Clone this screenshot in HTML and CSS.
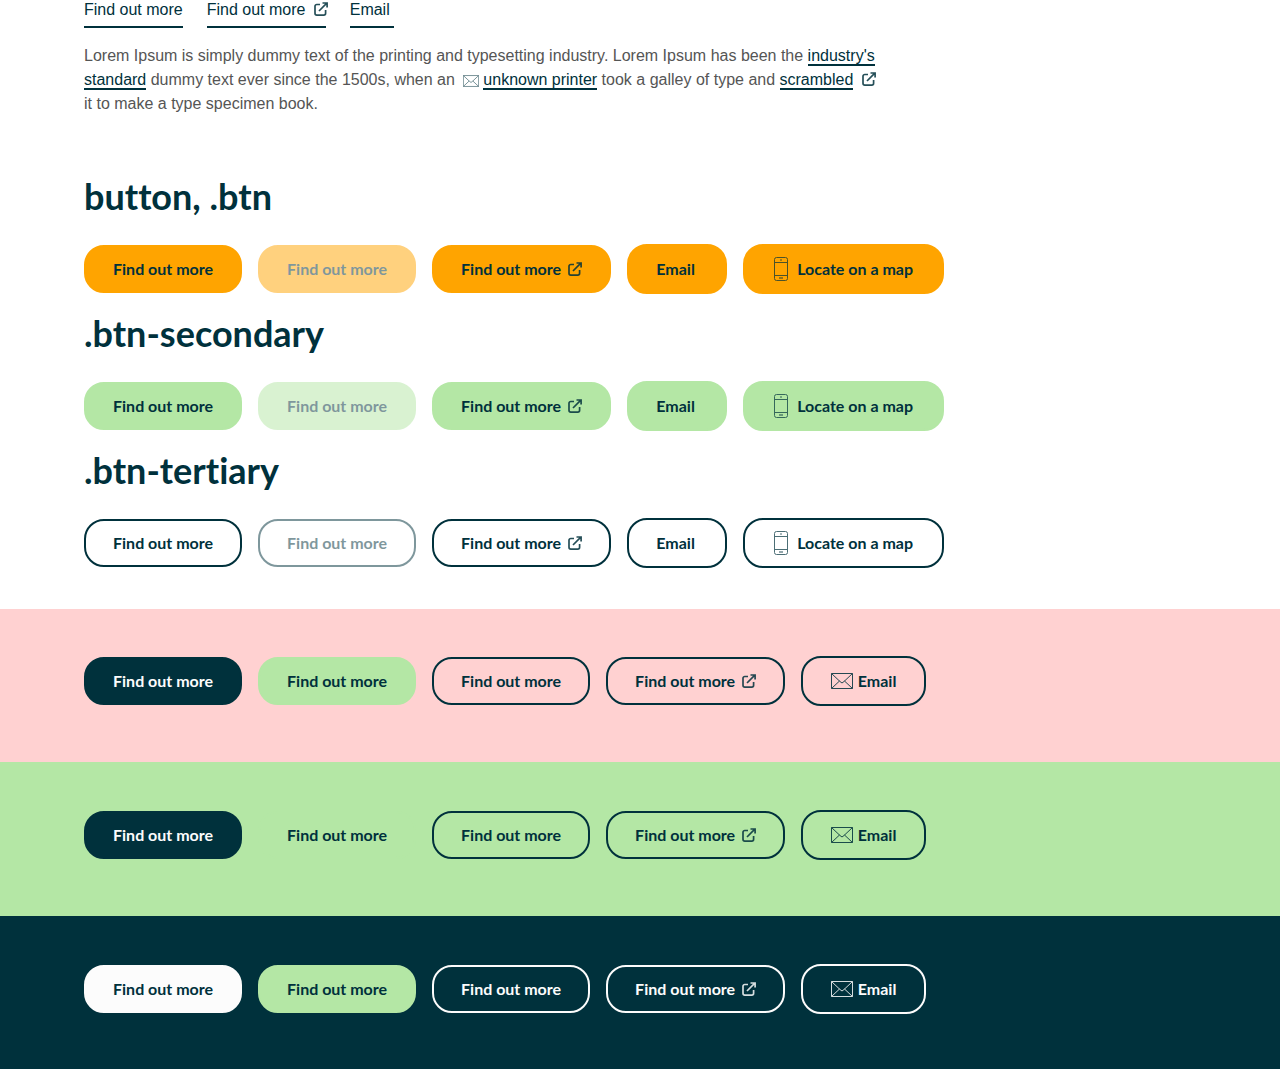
FILE: index.html
```html
<!DOCTYPE html>
<html lang="en">
<head>
<meta charset="utf-8">
<meta name="viewport" content="width=device-width, initial-scale=1">
<title>Links and buttons</title>
<link rel="stylesheet" href="styles.css">
</head>
<body>
<svg class="sprite" aria-hidden="true">
  <symbol id="external" viewBox="0 0 14 14">
    <path d="M6 2.500H2.800A1.800 1.800 0 0 0 1 4.300v7A1.800 1.800 0 0 0 2.800 13.100h7A1.800 1.800 0 0 0 11.600 11.300V8" fill="none" stroke="currentColor" stroke-width="1.700"/>
    <path d="M5 9L12.800 1.200M8.500 1h4.600v4.600" fill="none" stroke="currentColor" stroke-width="1.700"/>
  </symbol>
  <symbol id="mail" viewBox="0 0 22 16">
    <path d="M.5.5h21v15H.5zM.5.5L9 8.500l2 1.500 2-1.500L21.500.5M.5 15.500L8.500 8M21.500 15.500L13.500 8" fill="none" stroke="currentColor"/>
  </symbol>
  <symbol id="phone" viewBox="0 0 14 24">
    <path d="M2.500.5h9a2 2 0 0 1 2 2v19a2 2 0 0 1-2 2h-9a2 2 0 0 1-2-2v-19a2 2 0 0 1 2-2zM.5 5.500h13M.5 18.500h13M6 3h2" fill="none" stroke="currentColor"/>
    <path d="M5 21h4" stroke="currentColor" stroke-width="1.200"/>
  </symbol>
</svg>
<main class="container">
  <nav class="links" aria-label="Link styles">
    <a class="link" href="#">Find out more</a>
    <a class="link link-external" href="#">Find out more<svg class="icon"><use href="#external"/></svg></a>
    <a class="link link-email" href="#">Email</a>
  </nav>
  <p class="copy">Lorem Ipsum is simply dummy text of the printing and typesetting industry. Lorem Ipsum has been the <a href="#">industry's standard</a> dummy text ever since the 1500s, when an <svg class="icon-mail-small"><use href="#mail"/></svg><a href="#">unknown printer</a> took a galley of type and <a href="#">scrambled</a><svg class="icon"><use href="#external"/></svg> it to make a type specimen book.</p>

  <h2>button, .btn</h2>
  <div class="row">
    <button class="btn" type="button">Find out more</button>
    <button class="btn" type="button" disabled>Find out more</button>
    <a class="btn btn-external" href="#">Find out more<svg class="icon"><use href="#external"/></svg></a>
    <a class="btn btn-email" href="#">Email</a>
    <a class="btn btn-map" href="#"><svg class="icon-phone"><use href="#phone"/></svg>Locate on a map</a>
  </div>

  <h2>.btn-secondary</h2>
  <div class="row">
    <button class="btn btn-secondary" type="button">Find out more</button>
    <button class="btn btn-secondary" type="button" disabled>Find out more</button>
    <a class="btn btn-secondary btn-external" href="#">Find out more<svg class="icon"><use href="#external"/></svg></a>
    <a class="btn btn-secondary btn-email" href="#">Email</a>
    <a class="btn btn-secondary btn-map" href="#"><svg class="icon-phone"><use href="#phone"/></svg>Locate on a map</a>
  </div>

  <h2>.btn-tertiary</h2>
  <div class="row">
    <button class="btn btn-tertiary" type="button">Find out more</button>
    <button class="btn btn-tertiary" type="button" disabled>Find out more</button>
    <a class="btn btn-tertiary btn-external" href="#">Find out more<svg class="icon"><use href="#external"/></svg></a>
    <a class="btn btn-tertiary btn-email" href="#">Email</a>
    <a class="btn btn-tertiary btn-map" href="#"><svg class="icon-phone"><use href="#phone"/></svg>Locate on a map</a>
  </div>
</main>

<section class="band band-pink">
  <div class="container row">
    <button class="btn btn-primary" type="button">Find out more</button>
    <button class="btn btn-secondary" type="button">Find out more</button>
    <button class="btn btn-tertiary" type="button">Find out more</button>
    <a class="btn btn-tertiary btn-external" href="#">Find out more<svg class="icon"><use href="#external"/></svg></a>
    <a class="btn btn-tertiary btn-mail" href="#"><svg class="icon-mail"><use href="#mail"/></svg>Email</a>
  </div>
</section>
<section class="band band-green">
  <div class="container row">
    <button class="btn btn-primary" type="button">Find out more</button>
    <button class="btn btn-secondary" type="button">Find out more</button>
    <button class="btn btn-tertiary" type="button">Find out more</button>
    <a class="btn btn-tertiary btn-external" href="#">Find out more<svg class="icon"><use href="#external"/></svg></a>
    <a class="btn btn-tertiary btn-mail" href="#"><svg class="icon-mail"><use href="#mail"/></svg>Email</a>
  </div>
</section>
<section class="band band-dark">
  <div class="container row">
    <button class="btn btn-primary" type="button">Find out more</button>
    <button class="btn btn-secondary" type="button">Find out more</button>
    <button class="btn btn-tertiary" type="button">Find out more</button>
    <a class="btn btn-tertiary btn-external" href="#">Find out more<svg class="icon"><use href="#external"/></svg></a>
    <a class="btn btn-tertiary btn-mail" href="#"><svg class="icon-mail"><use href="#mail"/></svg>Email</a>
  </div>
</section>
</body>
</html>
```

FILE: styles.css
```css
:root {
  --ink: #00313c;
  --green: #b4e7a5;
  --orange: #ffa400;
  --pink: #ffd1d1;
  --white: #fcfcfc;
}

* { box-sizing: border-box; }

body {
  margin: 0;
  min-height: 100vh;
  display: flex;
  flex-direction: column;
  background: #fff;
  color: #555;
  font: 16px/24px "Liberation Sans", Arial, sans-serif;
}

.sprite { display: none; }

.container { padding: 0 84px; }

main.container { padding-bottom: 41px; }

.links {
  display: flex;
  gap: 24px;
}

.link {
  height: 28px;
  line-height: 20px;
  border-bottom: 2px solid var(--ink);
  color: var(--ink);
  text-decoration: none;
}

.link-external { width: 119px; white-space: nowrap; }

.link-email { padding-right: 4px; }

.icon {
  width: 14px;
  height: 14px;
  margin-left: 9px;
  vertical-align: -1px;
  opacity: .85;
}

.copy {
  max-width: 800px;
  margin: 16px 0 56px;
}

.copy a {
  color: var(--ink);
  text-decoration: none;
  border-bottom: 2px solid var(--ink);
}

.icon-mail-small {
  width: 16px;
  height: 12px;
  margin: 0 4px;
  vertical-align: -2px;
  color: var(--ink);
  opacity: .7;
}

.copy .icon { color: var(--ink); }

h2 {
  margin: 0 0 24px;
  color: var(--ink);
  font: 700 36px/48px Lato, sans-serif;
  font-variant-ligatures: none;
}

.row {
  display: flex;
  flex-wrap: wrap;
  align-items: center;
  gap: 16px;
}

.row + h2 { margin-top: 15px; }

.btn {
  display: inline-flex;
  align-items: center;
  justify-content: center;
  min-width: 158px;
  height: 48px;
  padding: 0 27px;
  border: 2px solid var(--orange);
  border-radius: 20px;
  background: var(--orange);
  color: var(--ink);
  font: 700 16px/24px Lato, sans-serif;
  text-decoration: none;
  white-space: nowrap;
}

.btn:disabled { opacity: .5; }

.btn-external { min-width: 178px; }

.btn .icon { margin-left: 7px; }

.btn-email {
  min-width: 100px;
  height: 50px;
  padding-right: 30px;
}

.btn-map {
  min-width: 201px;
  height: 50px;
}

.btn-mail {
  min-width: 125px;
  height: 50px;
}

.icon-phone {
  width: 14px;
  height: 24px;
  margin-right: 9px;
  opacity: .7;
}

.icon-mail {
  width: 22px;
  height: 16px;
  margin-right: 5px;
  opacity: .85;
}

.btn-primary {
  background: var(--ink);
  border-color: var(--ink);
  color: var(--white);
}

.btn-secondary {
  background: var(--green);
  border-color: var(--green);
}

.btn-tertiary {
  background: transparent;
  border-color: var(--ink);
}

.band { padding: 48px 0 56px; }

.band-pink {
  padding-top: 47px;
  background: var(--pink);
}

.band-green { background: var(--green); }

.band-dark {
  flex: 1;
  padding-bottom: 55px;
  background: var(--ink);
}

.band-dark .btn-primary {
  background: var(--white);
  border-color: var(--white);
  color: var(--ink);
}

.band-dark .btn-tertiary {
  border-color: var(--white);
  color: var(--white);
}
```
